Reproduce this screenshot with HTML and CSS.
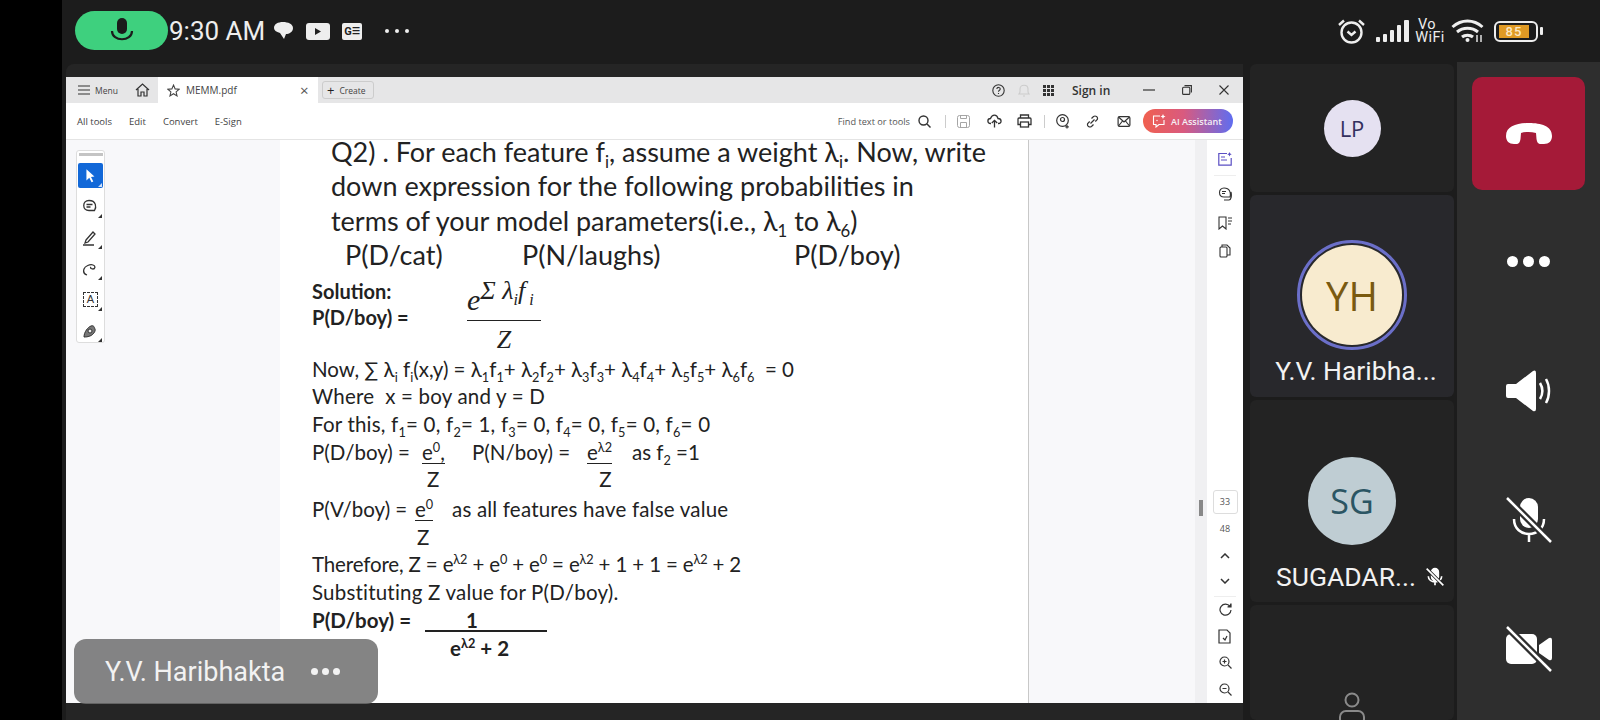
FILE: index.html
```html
<!DOCTYPE html>
<html lang="en">
<head>
    <meta charset="UTF-8">
    <title>Meeting - MEMM.pdf</title>
    <link rel="stylesheet" href="styles.css">
</head>
<body>
<div class="screen">
    <div class="strip"></div>
    <div class="main">
        <!-- phone status bar -->
        <div class="status">
            <div class="mic-pill">
                <svg width="24" height="26" viewBox="0 0 24 26"><rect x="7" y="1" width="10" height="16" rx="5" fill="#1b1b1b"/><path d="M2 14c0 11 20 11 20 0" fill="none" stroke="#1b1b1b" stroke-width="2.2"/></svg>
            </div>
            <span class="clock">9:30 AM</span>
            <svg class="st-chat" width="21" height="19" viewBox="0 0 21 19"><path d="M10 1c5 0 10 2 10 6s-4 6-7 6l-2 5-4-6C3 11 1 9 1 7c0-4 4-6 9-6z" fill="#eee"/></svg>
            <svg class="st-play" width="24" height="17" viewBox="0 0 24 17"><rect width="24" height="17" rx="3" fill="#eee"/><path d="M9 5l6 3.500-6 3.500z" fill="#222"/></svg>
            <div class="st-ge">G<span class="ge-lines">☰</span></div>
            <div class="st-dots"><i></i><i></i><i></i></div>
            <div class="grow"></div>
            <svg class="st-alarm" width="29" height="26" viewBox="0 0 29 26" fill="none" stroke="#eee" stroke-width="2.400"><circle cx="14.500" cy="14.500" r="10"/><path d="M10.500 13.500l4 3.500 4-3.500"/><path d="M2 7l5-4.500M27 7l-5-4.500"/></svg>
            <svg class="st-signal" width="33" height="24" viewBox="0 0 33 24" fill="#eee"><rect x="0" y="18" width="4" height="5" rx="1"/><rect x="7" y="15" width="4" height="8" rx="1"/><rect x="14" y="11" width="4" height="12" rx="1"/><rect x="21" y="6" width="4" height="17" rx="1"/><rect x="28" y="1" width="5" height="22" rx="1"/></svg>
            <div class="st-vowifi"><span>Vo</span><span>WiFi</span></div>
            <svg class="st-wifi" width="33" height="24" viewBox="0 0 33 24" fill="none" stroke="#eee" stroke-width="3"><path d="M1.500 8c9-8 21-8 30 0"/><path d="M6 13c6-5 15-5 21 0"/><path d="M11 18c3-2.500 8-2.500 11 0"/><circle cx="16.500" cy="21" r="2" fill="#eee" stroke="none"/><path d="M26 16v7M30 23v-7" stroke-width="1.400"/></svg>
            <div class="st-battery"><div class="bat-body"><span class="bat-level">85</span></div><div class="bat-nub"></div></div>
        </div>

        <div class="stage">
            <!-- shared screen -->
            <div class="share">
                <div class="pdf">
                    <div class="tabbar">
                        <svg class="ic-menu" width="12" height="10" viewBox="0 0 12 10" stroke="#333" stroke-width="1.200"><path d="M0 1h12M0 5h12M0 9h12"/></svg>
                        <span class="menu-label">Menu</span>
                        <svg class="ic-home" width="15" height="14" viewBox="0 0 15 14" fill="none" stroke="#333" stroke-width="1.200"><path d="M1 7l6.500-6 6.500 6M3 6v7h3V9h3v4h3V6"/></svg>
                        <div class="tab">
                            <svg width="13" height="13" viewBox="0 0 24 24" fill="none" stroke="#444" stroke-width="2"><path d="M12 2l3 7 7.500.7-5.700 5 1.700 7.300L12 18l-6.500 4 1.700-7.300-5.700-5L9 9z"/></svg>
                            <span class="tab-name">MEMM.pdf</span>
                            <span class="tab-x">×</span>
                        </div>
                        <div class="create"><span class="create-plus">+</span><span>Create</span></div>
                        <div class="grow"></div>
                        <svg class="ic-help" width="13" height="13" viewBox="0 0 13 13" fill="none" stroke="#333" stroke-width="1.100"><circle cx="6.500" cy="6.500" r="5.700"/><path d="M4.800 5c.2-2.200 3.500-2 3.400 0 0 1.300-1.700 1.300-1.700 2.700M6.500 9v1"/></svg>
                        <svg class="ic-bell" width="12" height="14" viewBox="0 0 12 14" fill="none" stroke="#ccc" stroke-width="1.100"><path d="M1 11c1.500-1.500 1-3 1-5 0-5 8-5 8 0 0 2-.5 3.500 1 5zM5 13h2"/></svg>
                        <div class="ic-grid"><i></i><i></i><i></i><i></i><i></i><i></i><i></i><i></i><i></i></div>
                        <span class="sign-in">Sign in</span>
                        <svg class="ic-min" width="12" height="2" viewBox="0 0 12 2" stroke="#333" stroke-width="1.200"><path d="M0 1h12"/></svg>
                        <svg class="ic-restore" width="10" height="10" viewBox="0 0 10 10" fill="none" stroke="#333" stroke-width="1.100"><rect x=".6" y="2.200" width="7.200" height="7.200" rx="1"/><path d="M2.500.6h6.900v7"/></svg>
                        <svg class="ic-close" width="10" height="10" viewBox="0 0 10 10" stroke="#333" stroke-width="1.100"><path d="M.5.5l9 9M9.500.5l-9 9"/></svg>
                    </div>
                    <div class="toolbar">
                        <span class="tool first">All tools</span>
                        <span class="tool">Edit</span>
                        <span class="tool">Convert</span>
                        <span class="tool">E-Sign</span>
                        <div class="grow"></div>
                        <span class="find">Find text or tools</span>
                        <svg class="tb-search" width="13" height="13" viewBox="0 0 13 13" fill="none" stroke="#333" stroke-width="1.400"><circle cx="5.500" cy="5.500" r="4.500"/><path d="M9 9l3.500 3.500"/></svg>
                        <div class="tb-div"></div>
                        <svg class="tb-save" width="13" height="13" viewBox="0 0 13 13" fill="none" stroke="#a5a5a5" stroke-width="1"><rect x=".5" y=".5" width="12" height="12" rx="2"/><path d="M3.500.5v3h6v-3M3.500 12.500V7.500h6v5"/></svg>
                        <svg class="tb-upload" width="15" height="14" viewBox="0 0 15 14" fill="none" stroke="#333" stroke-width="1.300"><path d="M4 9.500H3.500C0 9.500 0 4.500 3.500 4.500 5 0 10 0 11 4.500c4 0 4 5 .5 5H11"/><path d="M7.500 13.500V6.500M4.800 9l2.700-2.700L10.200 9"/></svg>
                        <svg class="tb-print" width="15" height="14" viewBox="0 0 15 14" fill="none" stroke="#333" stroke-width="1.300"><path d="M3.500 4V1h8v3M3.500 10.500H1v-5.500q0-1 1-1h11q1 0 1 1v5.500h-2.500"/><rect x="3.500" y="8" width="8" height="5"/></svg>
                        <div class="tb-div second"></div>
                        <svg class="tb-share" width="14" height="15" viewBox="0 0 14 15" fill="none" stroke="#333" stroke-width="1.200"><circle cx="6.500" cy="6.500" r="5.800"/><circle cx="6.500" cy="5.500" r="2"/><path d="M11 11v3.500M9.300 12.800h3.500"/></svg>
                        <svg class="tb-link" width="13" height="13" viewBox="0 0 13 13" fill="none" stroke="#333" stroke-width="1.200"><path d="M5.500 3.500l2-2q1.500-1 3 0t.8 3l-2 2M7.500 9.500l-2 2q-1.500 1-3 0t-.8-3l2-2M4.500 8.500l4-4"/></svg>
                        <svg class="tb-mail" width="14" height="11" viewBox="0 0 13 11" fill="none" stroke="#333" stroke-width="1.200"><rect x=".6" y=".6" width="11.800" height="9.800" rx="1.500"/><path d="M1 1l5.500 5L12 1M1 10l4-5M12 10L8 5"/></svg>
                        <div class="ai-btn">
                            <svg width="14" height="14" viewBox="0 0 14 14" fill="none" stroke="#fff" stroke-width="1.100"><path d="M8 2H1.500v8.500H4V13l3-2.500h5V6"/><path d="M11 0l.8 1.700 1.700.8-1.700.8L11 5l-.8-1.700-1.700-.8 1.700-.8z" fill="#fff" stroke="none"/><circle cx="5" cy="6.500" r=".7" fill="#fff" stroke="none"/></svg>
                            <span>AI Assistant</span>
                        </div>
                    </div>
                    <div class="doc">
                        <div class="side-left">
                            <div class="palette">
                                <div class="grip"></div>
                                <div class="pal-btn active"><svg width="16" height="16" viewBox="0 0 14 14" fill="#fff"><path d="M3 1l7 6.500-3 .3 2 4-1.500.7-2-4L3 11z"/></svg></div>
                                <div class="pal-btn"><svg width="17" height="16" viewBox="0 0 17 16" fill="none" stroke="#333" stroke-width="1.300"><path d="M7 1.500c-7 0-7 10 0 10h5.500c2-3 2-10-5.500-10zM4.500 5.500h6M4.500 8h4"/></svg></div>
                                <div class="pal-btn"><svg width="17" height="16" viewBox="0 0 17 16" fill="none" stroke="#333" stroke-width="1.300"><path d="M4 10l7-8 2 2-7 8-3 1zM1 15h11"/></svg></div>
                                <div class="pal-btn"><svg width="17" height="16" viewBox="0 0 17 16" fill="none" stroke="#333" stroke-width="1.300"><path d="M5 14c-3-1-4-3-3-6s6-5 9-4 2 4 0 4-3-1-2-2"/></svg></div>
                                <div class="pal-btn"><div class="pal-text">A</div></div>
                                <div class="pal-btn"><svg width="17" height="16" viewBox="0 0 17 16" fill="#777" stroke="#333" stroke-width="1"><path d="M2 14c0-5 4-10 7-11s3 1 4 3-2 6-5 7-4 1-6 1z"/><circle cx="8" cy="8" r="2" fill="#eee"/></svg></div>
                            </div>
                        </div>

                        <div class="page">
                            <div class="question">
                                <div class="q-first">Q2) . For each feature f<sub>i</sub>, assume a weight λ<sub>i</sub>. Now, write</div>
                                <div>down expression for the following probabilities in</div>
                                <div>terms of your model parameters(i.e., λ<sub>1</sub> to λ<sub>6</sub>)</div>
                                <div class="probs"><span class="p1">P(D/cat)</span><span class="p2">P(N/laughs)</span><span>P(D/boy)</span></div>
                            </div>
                            <div class="sol">
                                <div class="sol-labels"><div>Solution:</div><div>P(D/boy) =</div></div>
                                <div class="frac">
                                    <div class="frac-top"><span class="frac-e">e</span><span class="frac-exp">Σ λ<sub>i</sub>f<sub> i</sub></span></div>
                                    <div class="frac-bot">Z</div>
                                </div>
                            </div>
                            <div class="body-text">
                                <div>Now, ∑ λ<sub>i</sub> f<sub>i</sub>(x,y) = λ<sub>1</sub>f<sub>1</sub>+ λ<sub>2</sub>f<sub>2</sub>+ λ<sub>3</sub>f<sub>3</sub>+ λ<sub>4</sub>f<sub>4</sub>+ λ<sub>5</sub>f<sub>5</sub>+ λ<sub>6</sub>f<sub>6</sub>&nbsp; = 0</div>
                                <div class="wide">Where&nbsp; x = boy and y = D</div>
                                <div class="wide">For this, f<sub>1</sub>= 0, f<sub>2</sub>= 1, f<sub>3</sub>= 0, f<sub>4</sub>= 0, f<sub>5</sub>= 0, f<sub>6</sub>= 0</div>
                                <div class="eq-row">
                                    <span class="c-a">P(D/boy) =</span>
                                    <span class="c-b"><span class="ul">e<sup>0</sup>,</span></span>
                                    <span class="c-c">P(N/boy) =</span>
                                    <span class="c-d"><span class="ul">e<sup>λ2</sup></span></span>
                                    <span>as f<sub>2</sub> =1</span>
                                </div>
                                <div class="z-row"><span class="z1">Z</span><span class="z2">Z</span></div>
                                <div class="eq-row gap-line">
                                    <span class="c-e">P(V/boy) =</span>
                                    <span class="c-f"><span class="ul">e<sup>0</sup></span></span>
                                    <span class="wide">as all features have false value</span>
                                </div>
                                <div class="z-row"><span class="z3">Z</span></div>
                                <div class="tight">Therefore, Z = e<sup>λ2</sup> + e<sup>0</sup> + e<sup>0</sup> = e<sup>λ2</sup> + 1 + 1 = e<sup>λ2</sup> + 2</div>
                                <div class="wide">Substituting Z value for P(D/boy).</div>
                                <div class="bold-line"><b class="final-label">P(D/boy) =</b><span class="final-top"><b>1</b></span></div>
                                <div class="final-bot"><b>e<sup>λ2</sup> + 2</b></div>
                            </div>
                        </div>

                        <div class="side-right"></div>
                        <div class="scroll"><div class="thumb"></div></div>
                        <div class="rail">
                            <svg class="r-ai" width="14" height="14" viewBox="0 0 14 14" fill="none" stroke="#5b4fc4" stroke-width="1.200"><path d="M9 1.500H.8v11.700h12.400V6"/><path d="M3 5h4M3 8h6"/><path d="M11.500 0l.7 1.500 1.500.7-1.500.7-.7 1.500-.7-1.500-1.500-.7 1.500-.7z" fill="#5b4fc4" stroke="none"/></svg>
                            <div class="r-sep"></div>
                            <svg class="r-a" width="14" height="14" viewBox="0 0 14 14" fill="none" stroke="#333" stroke-width="1.100"><path d="M6 1c-6 0-6 9 0 9h6c1-4 0-9-6-9zM4 4.500h4M4 6.500h3M13 5c1 4 0 8-2 8H6"/></svg>
                            <svg class="r-b" width="14" height="14" viewBox="0 0 14 14" fill="none" stroke="#333" stroke-width="1.100"><path d="M1 1h7v12L4.500 10 1 13zM10 2h4M10 5h4M10 8h3"/></svg>
                            <svg class="r-c" width="14" height="14" viewBox="0 0 14 14" fill="none" stroke="#333" stroke-width="1.100"><path d="M4 3V1h5l3 3v7h-3"/><rect x="2" y="3" width="7" height="10" rx="1"/></svg>
                            <div class="grow"></div>
                            <div class="page-box">33</div>
                            <div class="page-total">48</div>
                            <svg class="r-up" width="10" height="6" viewBox="0 0 10 6" fill="none" stroke="#333" stroke-width="1.500"><path d="M1 5l4-4 4 4"/></svg>
                            <svg class="r-down" width="10" height="6" viewBox="0 0 10 6" fill="none" stroke="#333" stroke-width="1.500"><path d="M1 1l4 4 4-4"/></svg>
                            <div class="r-sep low"></div>
                            <svg class="r-rot" width="13" height="13" viewBox="0 0 13 13" fill="none" stroke="#333" stroke-width="1.200"><path d="M11 3.500A5.500 5.500 0 1 0 12 7"/><path d="M12 .5v3.500H8.500" fill="#333"/></svg>
                            <svg class="r-file" width="14" height="15" viewBox="0 0 14 15" fill="none" stroke="#333" stroke-width="1.200"><path d="M1 1h8l3 3v10H1zM5 9l2 2 2-4"/></svg>
                            <svg class="r-zi" width="13" height="13" viewBox="0 0 13 13" fill="none" stroke="#333" stroke-width="1.200"><circle cx="5.500" cy="5.500" r="4.500"/><path d="M9 9l3.500 3.500M3.500 5.500h4M5.500 3.500v4"/></svg>
                            <svg class="r-zo" width="13" height="13" viewBox="0 0 13 13" fill="none" stroke="#333" stroke-width="1.200"><circle cx="5.500" cy="5.500" r="4.500"/><path d="M9 9l3.500 3.500M3.500 5.500h4"/></svg>
                        </div>
                    </div>
                </div>
                <div class="name-tag"><span>Y.V. Haribhakta</span><div class="tag-dots"><i></i><i></i><i></i></div></div>
            </div>

            <!-- participant tiles -->
            <div class="tiles">
                <div class="tile t-lp"><div class="avatar lp">LP</div></div>
                <div class="tile t-big active-tile">
                    <div class="ring"><div class="avatar yh">YH</div></div>
                    <div class="t-name yh-name">Y.V. Haribha...</div>
                </div>
                <div class="tile t-big">
                    <div class="avatar sg">SG</div>
                    <div class="t-name sg-name">SUGADAR...
                        <svg width="20" height="20" viewBox="0 0 24 24" fill="none" stroke="#fff" stroke-width="2"><rect x="8" y="2" width="8" height="14" rx="4" fill="#fff"/><path d="M4 11c0 9 16 9 16 0M12 18v4"/><path d="M2 2l20 20" stroke="#232323" stroke-width="4"/><path d="M2 2l20 20"/></svg>
                    </div>
                </div>
                <div class="tile t-last">
                    <svg width="28" height="34" viewBox="0 0 28 34" fill="none" stroke="#8a8a8a" stroke-width="2"><circle cx="14" cy="8" r="6.500"/><rect x="2" y="19" width="24" height="14" rx="6"/></svg>
                </div>
            </div>

            <!-- call controls -->
            <div class="controls">
                <div class="hangup">
                    <svg width="46" height="21" viewBox="0 0 46 21" fill="#fff"><path d="M0 13C0 3 11 0 23 0s23 3 23 13c0 5-3 8-8 8h-3c-3 0-4-2-4.500-5l-.5-6c-5-1.500-10-1.500-15 0l-.5 6c-.5 3-1.500 5-4.500 5H8c-5 0-8-3-8-8z"/></svg>
                </div>
                <div class="ctl"><div class="ctl-dots"><i></i><i></i><i></i></div></div>
                <div class="ctl">
                    <svg width="46" height="42" viewBox="0 0 46 42" fill="#fff"><path d="M2 14h8L27 1q3-1.500 3 2v36q0 3-3 2L10 28H2q-2 0-2-2V16q0-2 2-2z"/><path d="M34 13c3 5 3 11 0 16M40 9c4 7 4 17 0 24" fill="none" stroke="#fff" stroke-width="2.500"/></svg>
                </div>
                <div class="ctl">
                    <svg width="46" height="46" viewBox="0 0 46 46" fill="none" stroke="#fff" stroke-width="2.500"><rect x="14" y="1" width="18" height="30" rx="9" fill="#fff" stroke="none"/><path d="M8 22c0 20 30 20 30 0M23 37v8"/><path d="M1 1l44 44" stroke="#2e2e2e" stroke-width="7"/><path d="M1 1l44 44"/></svg>
                </div>
                <div class="ctl">
                    <svg width="46" height="46" viewBox="0 0 46 46" fill="#fff"><rect x="0" y="8" width="31" height="30" rx="5"/><path d="M33 19l10-7q3-1 3 2v18q0 3-3 2l-10-7z"/><path d="M1 1l44 44" stroke="#2e2e2e" stroke-width="7"/><path d="M1 1l44 44" stroke="#fff" stroke-width="2.500"/></svg>
                </div>
            </div>
        </div>
    </div>
</div>
</body>
</html>
```

FILE: styles.css
```css
/* page frame */
* {
    box-sizing: border-box;
}
html, body {
    margin: 0;
    height: 100%;
}
body {
    font-family: Roboto, sans-serif;
    background-color: #1c1c1c;
    overflow: hidden;
}
.screen {
    display: flex;
    width: 1600px;
    height: 720px;
}
.strip {
    width: 62px;
    background-color: #000;
}
.main {
    flex: 1;
    display: flex;
    flex-direction: column;
    min-width: 0;
}
.grow {
    flex: 1;
}

/* status bar */
.status {
    height: 62px;
    display: flex;
    align-items: center;
    color: #eee;
}
.mic-pill {
    width: 93px;
    height: 39px;
    margin-left: 13px;
    margin-top: -2px;
    border-radius: 20px;
    background-color: #3ed07e;
    display: flex;
    align-items: center;
    justify-content: center;
}
.clock {
    font-size: 26px;
    margin-left: 1px;
    margin-top: -1px;
    width: 104px;
}
.st-chat {
    margin-top: -1px;
}
.st-play {
    margin-left: 12px;
}
.st-ge {
    width: 20px;
    height: 17px;
    margin-left: 12px;
    background-color: #eee;
    color: #222;
    font-size: 11px;
    font-weight: bold;
    border-radius: 2px;
    display: flex;
    align-items: center;
    justify-content: center;
}
.ge-lines {
    font-size: 9px;
}
.st-dots {
    display: flex;
    gap: 6px;
    margin-left: 23px;
}
.st-dots i {
    width: 4px;
    height: 4px;
    border-radius: 50%;
    background-color: #eee;
}
.st-signal {
    margin-left: 10px;
}
.st-vowifi {
    width: 30px;
    margin-left: 6px;
    font-size: 14.500px;
    line-height: 13.500px;
    letter-spacing: 0.4px;
    display: flex;
    flex-direction: column;
    text-align: center;
}
.st-vowifi span:first-child {
    margin-right: 6px;
}
.st-wifi {
    margin-left: 6px;
}
.st-battery {
    display: flex;
    align-items: center;
    margin-left: 10px;
    margin-right: 57px;
}
.bat-body {
    width: 44px;
    height: 21px;
    border: 2px solid #eee;
    border-radius: 6px;
    padding: 2px 3px;
}
.bat-level {
    display: block;
    width: 30px;
    height: 13px;
    background-color: #e09a24;
    color: #fbe8c4;
    font-size: 13px;
    line-height: 13px;
    font-weight: 500;
    text-align: center;
    letter-spacing: 1px;
}
.bat-nub {
    width: 3px;
    height: 8px;
    margin-left: 2px;
    border-radius: 1px;
    background-color: #eee;
}

/* stage */
.stage {
    flex: 1;
    display: flex;
    min-height: 0;
}
.share {
    position: relative;
    width: 1177px;
    margin-left: 4px;
    margin-top: 2px;
    padding: 13px 0 17px;
    background-color: #252525;
    border-radius: 8px 0 0 0;
}
.pdf {
    height: 100%;
    display: flex;
    flex-direction: column;
    background-color: #fff;
}

/* acrobat tabs */
.tabbar {
    height: 26px;
    display: flex;
    align-items: center;
    background-color: #e6e6e7;
    font-family: "Open Sans", sans-serif;
    font-size: 8.500px;
    color: #444;
}
.ic-menu {
    margin-left: 12px;
}
.menu-label {
    margin-left: 5px;
    width: 40px;
}
.tab {
    width: 160px;
    height: 26px;
    margin-left: 8px;
    padding-left: 9px;
    display: flex;
    align-items: center;
    background-color: #fff;
}
.tab-name {
    margin-left: 6px;
    font-size: 10px;
    width: 114px;
}
.tab-x {
    font-size: 15px;
    color: #555;
}
.create {
    width: 52px;
    height: 18px;
    margin-left: 4px;
    border: 1px solid #ccc;
    border-radius: 3px;
    display: flex;
    align-items: center;
    padding-left: 4px;
    gap: 5px;
    font-size: 8.500px;
}
.create-plus {
    font-size: 13px;
    color: #222;
}
.ic-bell {
    margin-left: 13px;
}
.ic-grid {
    width: 11px;
    display: grid;
    grid-template-columns: repeat(3, 3px);
    gap: 1px;
    margin-left: 13px;
}
.ic-grid i {
    height: 3px;
    background-color: #333;
}
.sign-in {
    margin-left: 18px;
    width: 71px;
    font-size: 12px;
    font-weight: 600;
    color: #333;
}
.ic-min {
    margin-right: 27px;
}
.ic-restore {
    margin-right: 27px;
}
.ic-close {
    margin-right: 14px;
}

/* acrobat toolbar */
.toolbar {
    height: 37px;
    display: flex;
    align-items: center;
    border-bottom: 1px solid #e4e4e4;
    font-family: "Open Sans", sans-serif;
    font-size: 9.500px;
    color: #444;
}
.tool {
    margin-left: 17px;
}
.tool.first {
    margin-left: 11px;
}
.find {
    color: #555;
    font-size: 9.200px;
}
.tb-search {
    margin-left: 8px;
}
.tb-div {
    width: 1px;
    height: 13px;
    margin-left: 14px;
    background-color: #ccc;
}
.tb-save {
    margin-left: 11px;
}
.tb-upload {
    margin-left: 17px;
}
.tb-print {
    margin-left: 15px;
}
.tb-div.second {
    margin-left: 12px;
}
.tb-share {
    margin-left: 11px;
}
.tb-link {
    margin-left: 16px;
}
.tb-mail {
    margin-left: 18px;
}
.ai-btn {
    width: 90px;
    height: 24px;
    margin-left: 12px;
    margin-right: 10px;
    border-radius: 12px;
    background: linear-gradient(90deg, #f0604f, #d95a7f 45%, #5f6df0);
    display: flex;
    align-items: center;
    padding-left: 9px;
    gap: 5px;
    color: #f5f0f5;
    font-size: 9px;
    font-weight: 600;
}

/* document area */
.doc {
    flex: 1;
    display: flex;
    min-height: 0;
}
.side-left {
    width: 214px;
    padding: 10px 0 0 10px;
    background-color: #f8f8fa;
}
.palette {
    width: 29px;
    height: 193px;
    padding-top: 2px;
    background-color: #fff;
    border: 1px solid #ddd;
    border-radius: 3px;
    display: flex;
    flex-direction: column;
    align-items: center;
}
.grip {
    width: 24px;
    height: 3px;
    margin-bottom: 7px;
    background-color: #c4c4c4;
    flex-shrink: 0;
}
.pal-btn {
    position: relative;
    width: 25px;
    height: 25px;
    margin-bottom: 6px;
    flex-shrink: 0;
    display: flex;
    align-items: center;
    justify-content: center;
}
.pal-btn:last-child {
    margin-bottom: 0;
}
/* small corner mark on each tool */
.pal-btn::after {
    content: "";
    position: absolute;
    right: 1px;
    bottom: 1px;
    border-left: 4px solid transparent;
    border-bottom: 4px solid #333;
}
.pal-btn.active {
    background-color: #1268d8;
    border-radius: 2px;
}
.pal-btn.active::after {
    border-bottom-color: #cfe0f8;
}
.pal-text {
    width: 15px;
    height: 15px;
    border: 1px dashed #333;
    font-family: "Liberation Sans", sans-serif;
    font-size: 11px;
    line-height: 13px;
    text-align: center;
    color: #333;
}

/* pdf page */
.page {
    width: 749px;
    border-right: 1px solid #c8c8c8;
    background-color: #fff;
    font-family: Lato, "Noto Sans", sans-serif;
    color: #222;
}
.page sub {
    font-size: 62%;
    line-height: 0;
}
.page sup {
    font-size: 62%;
    line-height: 0;
}
.question {
    padding-left: 51px;
    font-size: 27px;
    line-height: 34.500px;
}
.q-first {
    line-height: 24px;
    margin-bottom: 5px;
}
.probs {
    display: flex;
    padding-left: 14px;
}
.p1 {
    width: 177px;
}
.p2 {
    width: 272px;
}
.sol {
    display: flex;
    height: 52px;
    margin-top: 5px;
    padding-left: 32px;
    font-size: 20px;
    line-height: 26px;
    font-weight: bold;
}
.sol-labels {
    width: 155px;
}
.frac {
    width: 74px;
    font-family: "Liberation Serif", serif;
    font-style: italic;
    font-weight: normal;
    text-align: center;
}
.frac-top {
    display: flex;
    height: 43px;
    border-bottom: 1px solid #222;
    white-space: nowrap;
}
.frac-e {
    font-size: 30px;
    line-height: 30px;
    margin-top: 7px;
}
.frac-exp {
    font-size: 26px;
    line-height: 26px;
}
.frac-bot {
    margin-top: 3px;
    font-size: 26px;
    line-height: 32px;
}
.body-text {
    margin-top: 26px;
    padding-left: 32px;
    font-size: 20.500px;
    line-height: 27.700px;
    white-space: nowrap;
}
.wide {
    letter-spacing: 0.2px;
}
.tight {
    letter-spacing: -0.15px;
}
.eq-row {
    display: flex;
}
.c-a {
    width: 110px;
}
.c-b {
    width: 50px;
}
.c-c {
    width: 115px;
}
.c-d {
    width: 45px;
}
.c-e {
    width: 103px;
}
.c-f {
    width: 37px;
}
.ul {
    display: inline-block;
    line-height: 22px;
    border-bottom: 1px solid #222;
}
.z-row {
    height: 27.700px;
}
.z1 {
    margin-left: 115px;
}
.z2 {
    margin-left: 160px;
}
.z3 {
    margin-left: 105px;
}
.gap-line {
    margin-top: 2px;
}
.bold-line {
    display: flex;
}
.final-label {
    width: 113px;
}
.final-top {
    width: 122px;
    padding-left: 41px;
    border-bottom: 2px solid #222;
    height: 25px;
}
.final-bot {
    padding-left: 138px;
}

/* right gray part and rail */
.side-right {
    width: 166px;
    background-color: #f8f8fa;
}
.scroll {
    width: 12px;
    background-color: #f0f0f2;
    padding: 360px 0 0 4px;
}
.thumb {
    width: 4px;
    height: 16px;
    background-color: #888;
}
.rail {
    flex: 1;
    display: flex;
    flex-direction: column;
    align-items: center;
    background-color: #fff;
    font-family: "Open Sans", sans-serif;
    font-size: 9px;
    color: #555;
}
.r-ai {
    margin-top: 12px;
}
.r-sep {
    width: 22px;
    height: 1px;
    margin-top: 9px;
    background-color: #eee;
}
.r-a {
    margin-top: 11px;
}
.r-b {
    margin-top: 15px;
}
.r-c {
    margin-top: 14px;
}
.page-box {
    width: 25px;
    height: 24px;
    border: 1px solid #ddd;
    border-radius: 3px;
    line-height: 22px;
    text-align: center;
}
.page-total {
    margin-top: 8px;
    margin-bottom: 18px;
}
.r-up {
    margin-bottom: 19px;
}
.r-sep.low {
    margin-top: 12px;
    margin-bottom: 6px;
}
.r-rot {
    margin-bottom: 13px;
}
.r-file {
    margin-bottom: 12px;
}
.r-zi {
    margin-bottom: 14px;
}
.r-zo {
    margin-bottom: 7px;
}

/* name overlay on the shared screen */
.name-tag {
    position: absolute;
    left: 8px;
    bottom: 16px;
    width: 304px;
    height: 65px;
    padding: 0 0 0 31px;
    border-radius: 12px;
    background-color: rgba(110, 110, 110, 0.85);
    color: #f2f2f2;
    font-size: 27px;
    display: flex;
    align-items: center;
}
.tag-dots {
    display: flex;
    gap: 4px;
    margin-left: 26px;
}
.tag-dots i {
    width: 7px;
    height: 7px;
    border-radius: 50%;
    background-color: #f2f2f2;
}

/* participant tiles */
.tiles {
    width: 204px;
    margin-left: 7px;
    margin-top: 2px;
    display: flex;
    flex-direction: column;
    gap: 3px;
    overflow: hidden;
}
.tile {
    background-color: #232323;
    border-radius: 6px;
    display: flex;
    flex-direction: column;
    align-items: center;
    flex-shrink: 0;
}
.t-lp {
    height: 128px;
    justify-content: center;
}
.t-big {
    height: 202px;
    padding-top: 20px;
}
.active-tile {
    background-color: #28282c;
    padding-top: 45px;
}
.t-last {
    flex: 1;
    flex-shrink: 1;
    justify-content: flex-end;
    padding-bottom: 0;
}
.t-last svg {
    margin-bottom: -6px;
    flex-shrink: 0;
}
.avatar {
    border-radius: 50%;
    display: flex;
    align-items: center;
    justify-content: center;
    font-family: "Open Sans", sans-serif;
}
.lp {
    width: 57px;
    height: 57px;
    background-color: #e5e1f1;
    color: #33305e;
    font-size: 22px;
}
.ring {
    width: 110px;
    height: 110px;
    padding: 2px;
    border-radius: 50%;
    border: 3px solid #6b6fc9;
}
.yh {
    width: 100%;
    height: 100%;
    background-color: #f8ebcf;
    color: #7a5a10;
    font-size: 40px;
}
.sg {
    width: 88px;
    height: 88px;
    margin-top: 37px;
    background-color: #bfcdd3;
    color: #2b5563;
    font-size: 34px;
}
.t-name {
    margin-top: 5px;
    font-size: 26.500px;
    color: #f2f2f2;
    white-space: nowrap;
}
.yh-name {
    padding-left: 8px;
}
.sg-name {
    display: flex;
    align-items: center;
    gap: 9px;
    margin-top: 16px;
    padding-left: 26px;
    width: 100%;
}

/* call controls */
.controls {
    flex: 1;
    margin-left: 3px;
    padding-top: 15px;
    background-color: #2e2e2e;
    display: flex;
    flex-direction: column;
    align-items: center;
}
.hangup {
    width: 113px;
    height: 113px;
    flex-shrink: 0;
    border-radius: 10px;
    background-color: #a51a38;
    display: flex;
    align-items: center;
    justify-content: center;
}
.hangup + .ctl {
    margin-top: 7px;
}
.ctl {
    height: 129px;
    flex-shrink: 0;
    display: flex;
    align-items: center;
    justify-content: center;
}
.ctl-dots {
    display: flex;
    gap: 5px;
}
.ctl-dots i {
    width: 11px;
    height: 11px;
    border-radius: 50%;
    background-color: #fff;
}
```
